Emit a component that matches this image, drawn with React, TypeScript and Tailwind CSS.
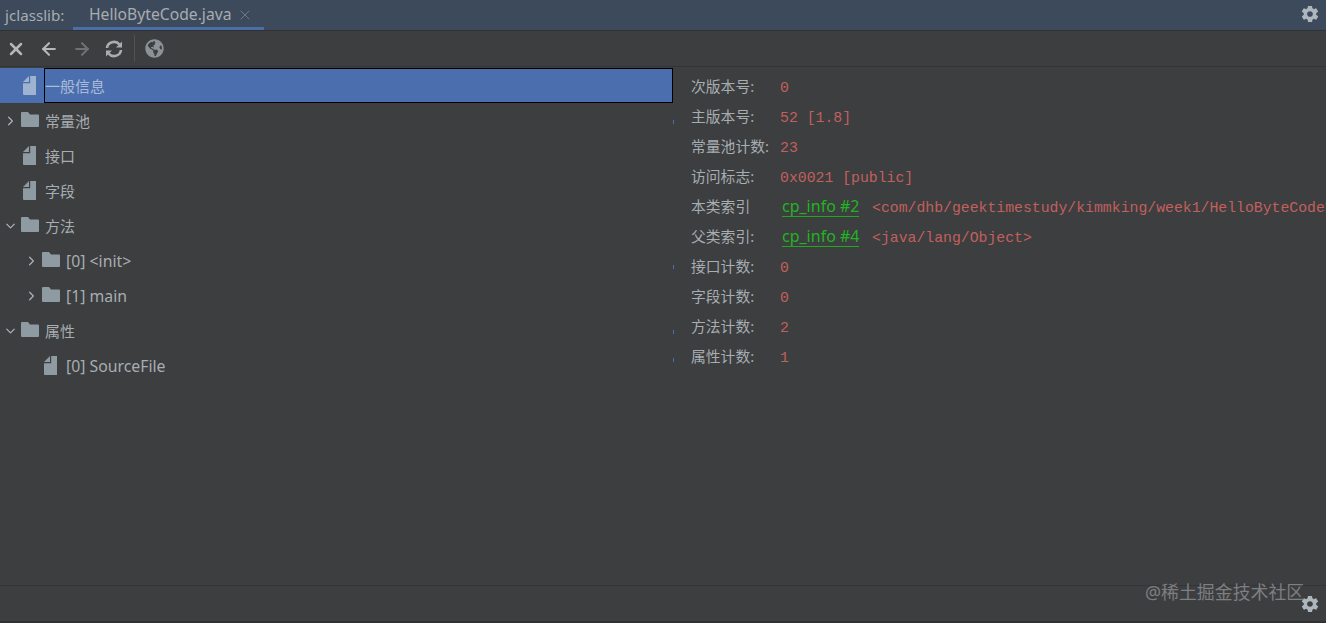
import React from "react";
import { X, ArrowLeft, ArrowRight, ChevronRight, ChevronDown } from "lucide-react";
import { FaGlobeAmericas } from "react-icons/fa";
import { IoMdSettings } from "react-icons/io";

const ui = "font-['Noto_Sans','Noto_Sans_CJK_SC',sans-serif]";

function FileIcon({ selected }: { selected?: boolean }) {
  return (
    <svg width="14" height="20" viewBox="0 0 14 20" className="shrink-0">
      <path d="M0 6 L6 0 L6 6 Z" fill={selected ? "#9db3cf" : "#8f9ba3"} />
      <path d="M0 7.2 L7.2 7.2 L7.2 0 L13 0 L13 19 L1 19 Q0 19 0 18 Z" fill={selected ? "#9db3cf" : "#8f9ba3"} />
    </svg>
  );
}

function FolderIcon() {
  return (
    <svg width="18" height="15" viewBox="0 0 18 15" className="mb-[2px] shrink-0">
      <path d="M0 1 Q0 0 1 0 L7 0 L9 2.5 L17 2.5 Q18 2.5 18 3.5 L18 14 Q18 15 17 15 L1 15 Q0 15 0 14 Z" fill="#8f9ba3" />
    </svg>
  );
}

type Node = { indent: number; chevron?: "right" | "down"; kind: "file" | "folder"; label: string };

const nodes: Node[] = [
  { indent: 0, chevron: "right", kind: "folder", label: "常量池" },
  { indent: 0, kind: "file", label: "接口" },
  { indent: 0, kind: "file", label: "字段" },
  { indent: 0, chevron: "down", kind: "folder", label: "方法" },
  { indent: 1, chevron: "right", kind: "folder", label: "[0] <init>" },
  { indent: 1, chevron: "right", kind: "folder", label: "[1] main" },
  { indent: 0, chevron: "down", kind: "folder", label: "属性" },
  { indent: 1, kind: "file", label: "[0] SourceFile" },
];

function TreeRow({ node }: { node: Node }) {
  return (
    <div className={`flex h-[35px] items-center ${node.indent ? "pl-[24px]" : "pl-[3px]"}`}>
      <span className="flex w-[15px] shrink-0 justify-center">
        {node.chevron === "right" && <ChevronRight size={20} strokeWidth={2} color="#a9b0b5" />}
        {node.chevron === "down" && <ChevronDown size={20} strokeWidth={2} color="#a9b0b5" />}
      </span>
      <span className={`flex w-[27px] shrink-0 ${node.kind === "file" ? "pl-[5px]" : "pl-[3px]"}`}>
        {node.kind === "file" ? <FileIcon /> : <FolderIcon />}
      </span>
      <span className={`pt-[2px] leading-none whitespace-pre text-[#a7adb1] ${node.indent ? "text-[15.8px]" : "text-[15px]"}`}>{node.label}</span>
    </div>
  );
}

type Info = { label: string; value?: string; link?: string; tick?: string };

const infos: Info[] = [
  { label: "次版本号:", value: "0" },
  { label: "主版本号:", value: "52 [1.8]", tick: "top-[18px]" },
  { label: "常量池计数:", value: "23" },
  { label: "访问标志:", value: "0x0021 [public]" },
  { label: "本类索引", link: "cp_info #2", value: "<com/dhb/geektimestudy/kimmking/week1/HelloByteCode>" },
  { label: "父类索引:", link: "cp_info #4", value: "<java/lang/Object>" },
  { label: "接口计数:", value: "0", tick: "top-[13px]" },
  { label: "字段计数:", value: "0" },
  { label: "方法计数:", value: "2", tick: "top-[18px]" },
  { label: "属性计数:", value: "1", tick: "top-[16px]" },
];

function InfoRow({ info }: { info: Info }) {
  return (
    <div className="relative flex h-[30px] items-center pl-[18px]">
      {info.tick && <span className={`absolute left-0 h-[4px] w-px bg-[#4b6eaf] ${info.tick}`} />}
      <span className="mb-[1px] w-[89px] shrink-0 text-[14.8px] leading-none whitespace-nowrap text-[#a7adb1]">{info.label}</span>
      {info.link && (
        <span className="ml-[2px] mr-[13px] w-[77px] shrink-0 border-b border-[#1fa91f] pb-[1px] text-[16px] leading-[18px] whitespace-nowrap text-[#22b422]">
          {info.link}
        </span>
      )}
      <span className="pt-[2px] text-[14.8px] leading-none whitespace-pre text-[#c2605c] font-['Liberation_Mono',monospace]">{info.value}</span>
    </div>
  );
}

export default function App() {
  return (
    <div className={`relative flex h-[623px] w-[1326px] flex-col overflow-hidden bg-[#3c3e40] ${ui}`}>
      {/* tab bar */}
      <div className="flex h-[31px] shrink-0 items-stretch border-b border-[#2f3234] bg-[#3d4a5b] text-[15.7px] text-[#a7adb1]">
        <div className="flex w-[73px] items-center pl-[5px] text-[15.2px]">jclasslib:</div>
        <div className="flex w-[191px] items-center gap-[5px] border-b-[3px] border-[#4a6ea8] pl-[16px] pt-[3px]">
          <span>HelloByteCode.java</span>
          <X size={16} strokeWidth={1.5} color="#6d7986" />
        </div>
        <div className="ml-auto mb-[2px] flex items-center pr-[6px]">
          <IoMdSettings size={20} color="#aeb6bd" />
        </div>
      </div>
      {/* toolbar */}
      <div className="flex h-[36px] shrink-0 items-center border-b border-[#333537] pl-[6px]">
        <span className="flex w-[33px] items-center"><X size={20} strokeWidth={3} color="#b4b8ba" /></span>
        <span className="flex w-[33px] items-center"><ArrowLeft size={20} strokeWidth={2.5} color="#b4b8ba" /></span>
        <span className="flex w-[33px] items-center"><ArrowRight size={20} strokeWidth={2.5} color="#6e7275" /></span>
        <svg width="18" height="18" viewBox="0 0 18 18" fill="none" className="shrink-0" stroke="#a9adb0" strokeWidth="2.6">
          <path d="M2 8 A7 6.5 0 0 1 14.5 4.5" />
          <path d="M16 10 A7 6.5 0 0 1 3.5 13.5" />
          <path d="M17 1.5 V7.5 H11 Z" fill="#a9adb0" stroke="none" />
          <path d="M1 16.5 V10.5 H7 Z" fill="#a9adb0" stroke="none" />
        </svg>
        <span className="ml-[11px] mr-[10px] h-[27px] w-px bg-[#505355]" />
        <FaGlobeAmericas size={19} color="#8a9298" />
      </div>
      {/* body */}
      <div className="flex min-h-0 flex-1 border-b border-[#333537]">
        <div className="w-[673px] shrink-0 pt-px">
          <div className="flex h-[35px] bg-[#4b6eaf]">
            <span className="flex w-[44px] shrink-0 items-center pl-[23px]"><FileIcon selected /></span>
            <span className="flex flex-1 items-center border border-black pt-[2px] text-[15px] leading-none text-[#a9bbd6]">一般信息</span>
          </div>
          {nodes.map((n) => (
            <TreeRow key={n.label} node={n} />
          ))}
        </div>
        <div className="flex-1 overflow-hidden pt-[5px]">
          {infos.map((i) => (
            <InfoRow key={i.label} info={i} />
          ))}
        </div>
      </div>
      {/* status bar */}
      <div className="flex h-[35px] shrink-0 items-end justify-end pb-[7px] pr-[6px]">
        <IoMdSettings size={20} color="#aeb6bd" />
      </div>
      <div className="h-[2px] shrink-0 bg-[#2f3133]" />
      <span className="absolute left-[1145px] top-[580px] text-[17.9px] leading-[24px] whitespace-nowrap text-[#7d7f81]">@稀土掘金技术社区</span>
    </div>
  );
}
